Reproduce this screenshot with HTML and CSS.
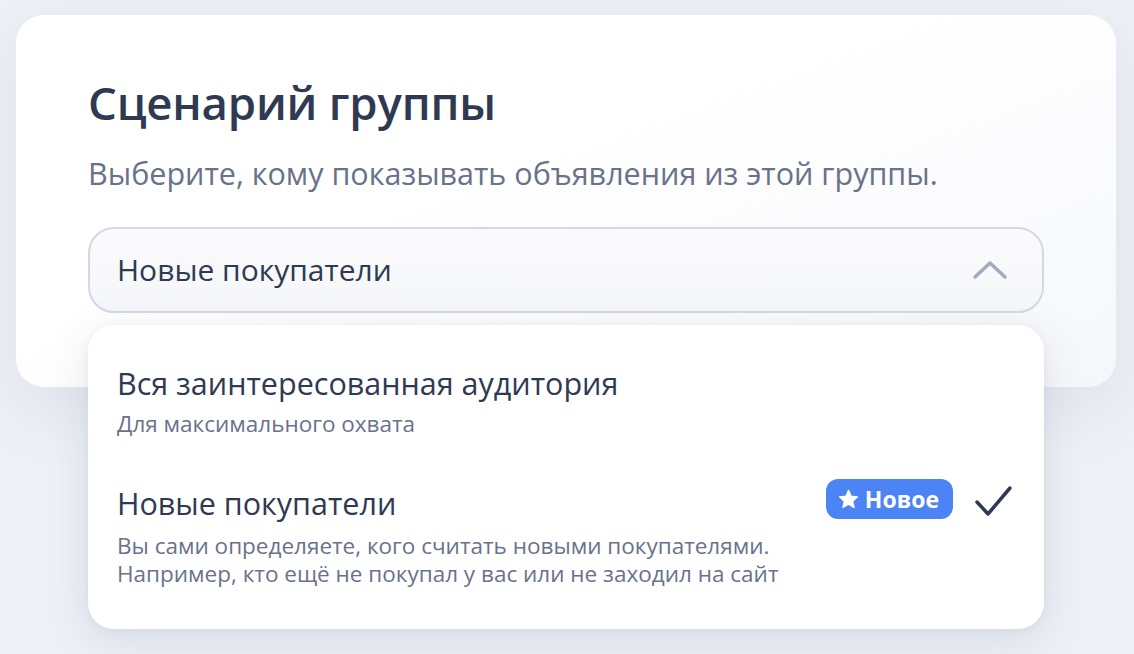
FILE: index.html
```html
<!DOCTYPE html>
<html lang="ru">
<head>
    <meta charset="UTF-8">
    <title>Сценарий группы</title>
    <link rel="stylesheet" href="styles.css">
</head>
<body>
<div class="page">
    <div class="card">
        <h1 class="card-title">Сценарий группы</h1>
        <p class="card-hint">Выберите, кому показывать объявления из этой группы.</p>
        <div class="select">
            <div class="select-control">
                <span class="select-value">Новые покупатели</span>
                <svg class="select-arrow" width="36" height="20" viewBox="0 0 36 20">
                    <path d="M3 17 L18 3 L33 17" fill="none" stroke="#a2abbd" stroke-width="3.5" stroke-linecap="round" stroke-linejoin="round"/>
                </svg>
            </div>
            <ul class="select-menu">
                <li class="option">
                    <div class="option-text">
                        <div class="option-title">Вся заинтересованная аудитория</div>
                        <div class="option-desc">Для максимального охвата</div>
                    </div>
                </li>
                <li class="option option-checked">
                    <div class="option-text">
                        <div class="option-title">Новые покупатели</div>
                        <div class="option-desc">Вы сами определяете, кого считать новыми покупателями.<br>Например, кто ещё не покупал у вас или не заходил на сайт</div>
                    </div>
                    <span class="badge">
                        <svg width="21" height="20" viewBox="0 0 24 23">
                            <path d="M12 1.5 L15 8.3 L22.4 9 L16.8 14 L18.4 21.3 L12 17.5 L5.6 21.3 L7.2 14 L1.6 9 L9 8.3 Z" fill="#fff" stroke="#fff" stroke-width="1.5" stroke-linejoin="round"/>
                        </svg>
                        Новое
                    </span>
                    <svg class="check" width="40" height="34" viewBox="0 0 40 34">
                        <path d="M3 17 L14 29 L36 3" fill="none" stroke="#2f3a52" stroke-width="3.5" stroke-linecap="round" stroke-linejoin="round"/>
                    </svg>
                </li>
            </ul>
        </div>
    </div>
</div>
</body>
</html>
```

FILE: styles.css
```css
*{
    margin:0;padding:0;
    box-sizing: border-box;
}
body{
    background:#edf0f5;
    font-family: "Open Sans", "Noto Sans", sans-serif;
    color:#2f3a52;
}
.page{
    padding:15px 18px 0 16px;
    height:654px;
    overflow:hidden;
}
.card{
    position: relative;
    height:372px;
    padding:59px 72px 0 72px;
    border-radius:28px;
    background: linear-gradient(160deg, #ffffff 40%, #f6f7fa 100%);
    box-shadow: 0 20px 60px rgba(160,170,195,0.18);
}
.card-title{
    font-size:45.5px;
    font-weight:600;
    line-height:56px;
    letter-spacing:-0.2px;
    color:#2f3a52;
}
.card-hint{
    margin-top:23px;
    font-size:30.5px;
    line-height:40px;
    color:#69728a;
}
.select{
    position: relative;
    margin-top:34px;
}
.select-control{
    height:86px;
    border:2px solid #d3d8e3;
    border-radius:26px;
    display:flex;
    align-items:center;
    justify-content:space-between;
    padding:0 34px 0 27px;
    background: linear-gradient(180deg, #fbfbfd 0%, #f5f6f9 100%);
}
.select-value{
    font-size:30px;
    line-height:40px;
    color:#2f3a52;
}
.select-arrow{
    display:block;
}
.select-menu{
    position: absolute;
    left:0;
    right:0;
    top:98px;
    list-style: none;
    background:#fff;
    border-radius:26px;
    padding:38px 0 41px 0;
    box-shadow: 0 10px 40px rgba(120,130,160,0.18), 0 2px 8px rgba(120,130,160,0.08);
}
.option{
    display:flex;
    align-items:flex-start;
    padding:0 30px 0 29px;
}
.option + .option{
    margin-top:45px;
}
.option-text{
    flex:1;
}
.option-title{
    font-size:30.5px;
    line-height:40px;
    color:#2f3a52;
}
.option-desc{
    margin-top:7px;
    font-size:22.5px;
    line-height:28px;
    color:#69728a;
}
.option-checked .option-desc{
    margin-top:9px;
}
.badge{
    display:flex;
    align-items:center;
    gap:6px;
    height:40px;
    margin-top:-4px;
    padding:0 14px 0 12px;
    border-radius:12px;
    background:#4d84f5;
    color:#fff;
    font-size:23px;
    font-weight:700;
}
.check{
    display:block;
    margin:2px 0 0 21px;
}
```
